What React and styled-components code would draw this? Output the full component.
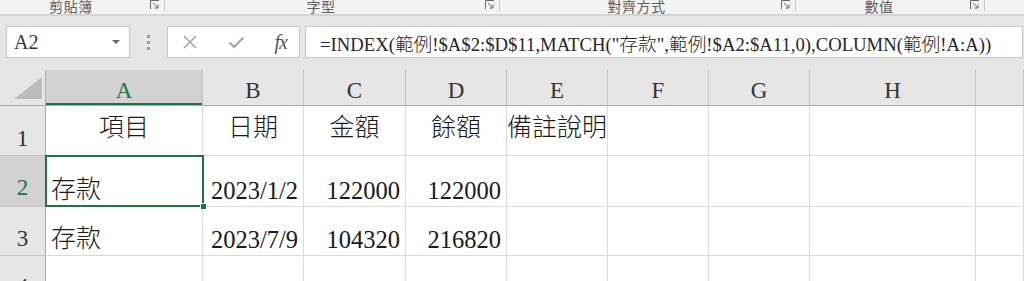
import React from "react";
import styled, { createGlobalStyle, css } from "styled-components";

const GREEN = "#217346";
const GRID = "#dadada";
const HEAD_LINE = "#c4c4c4";

const GlobalStyle = createGlobalStyle`
  html, body { margin: 0; padding: 0; background: #e6e6e6; overflow: hidden; }
  * { box-sizing: border-box; }
`;

const Page = styled.div`
  width: 1024px;
  height: 281px;
  overflow: hidden;
  display: flex;
  flex-direction: column;
  background: #e6e6e6;
  font-family: "Liberation Serif", "Noto Sans CJK TC", serif;
  color: #1a1a1a;
`;

/* ---------- Ribbon ---------- */
const Ribbon = styled.div`
  height: 15px;
  display: flex;
  background: #f3f3f3;
  border-bottom: 1px solid #d4d4d4;
  box-shadow: 0 1px 1px rgba(0, 0, 0, 0.07);
  overflow: hidden;
  flex: none;
`;

const RibbonGroup = styled.div`
  width: ${(p) => p.$w}px;
  flex: ${(p) => (p.$w ? "none" : "1")};
  height: 11px;
  display: flex;
  align-items: flex-end;
  border-right: ${(p) => (p.$last ? "none" : "1px solid #c8c8c8")};
`;

const GroupLabel = styled.div`
  flex: 1;
  text-align: center;
  font-family: "Noto Sans CJK TC", sans-serif;
  font-size: 14px;
  line-height: 14px;
  color: #5e5e5e;
  margin-bottom: -2px;
  letter-spacing: 0.5px;
`;

const Launcher = styled.svg`
  width: 10px;
  height: 10px;
  margin: 0 4px 0 8px;
  flex: none;
  align-self: flex-start;
`;

const LaunchIcon = () => (
  <Launcher viewBox="0 0 10 10">
    <path d="M0.5 9V0.5H9" fill="none" stroke="#6a6a6a" strokeWidth="1" />
    <path d="M3 3L8 8M8 4.5V8H4.5" fill="none" stroke="#6a6a6a" strokeWidth="1" />
  </Launcher>
);

/* ---------- Formula bar ---------- */
const FormulaRow = styled.div`
  display: flex;
  align-items: center;
  height: 32px;
  margin: 11px 1px 12px 6px;
  flex: none;
`;

const Box = styled.div`
  height: 32px;
  background: #fff;
  border: 1px solid #c6c6c6;
  display: flex;
  align-items: center;
`;

const NameBox = styled(Box)`
  width: 124px;
  padding: 0 9px 0 7px;
  font-family: "Liberation Serif", serif;
  font-size: 20px;
  color: #333;
  justify-content: space-between;
`;

const Caret = styled.span`
  width: 0;
  height: 0;
  border-left: 4px solid transparent;
  border-right: 4px solid transparent;
  border-top: 4px solid #6a6a6a;
`;

const Grip = styled.div`
  width: 37px;
  display: flex;
  flex-direction: column;
  align-items: center;
  gap: 3px;
  span {
    width: 3px;
    height: 3px;
    background: #9c9c9c;
  }
`;

const FxBox = styled(Box)`
  width: 133px;
  padding: 0 8px 0 14px;
  justify-content: space-between;
`;

const FxText = styled.span`
  font-family: "Liberation Serif", serif;
  font-style: italic;
  font-size: 20px;
  color: #555;
  margin-right: 4px;
  letter-spacing: -1px;
`;

const FormulaBox = styled(Box)`
  flex: 1;
  margin-left: 5px;
  padding-left: 14px;
  font-size: 18.7px;
  font-weight: 300;
  color: #262626;
  white-space: nowrap;
  overflow: hidden;
`;

/* ---------- Sheet grid ---------- */
const Sheet = styled.div`
  flex: none;
  display: grid;
  grid-template-columns: 46px 157px 101px 102px 101px 101px 101px 101px 166px 1fr;
  grid-template-rows: 36px 50px 51px 49px 49px;
  background: #fff;
`;

const Corner = styled.div`
  background: #e6e6e6;
  border-right: 1px solid #ababab;
  border-bottom: 1px solid #ababab;
  display: flex;
  align-items: flex-end;
  justify-content: flex-end;
  padding: 0 3px 6px 0;
`;

const Triangle = styled.div`
  width: 0;
  height: 0;
  border-left: 28px solid transparent;
  border-bottom: 22px solid #bcbcbc;
`;

const ColHead = styled.div`
  background: ${(p) => (p.$sel ? "#d2d2d2" : "#e6e6e6")};
  color: ${(p) => (p.$sel ? GREEN : "#333")};
  border-right: 1px solid ${HEAD_LINE};
  border-bottom: 1px solid #ababab;
  ${(p) => p.$sel && css`box-shadow: inset 0 -2px 0 ${GREEN};`}
  display: flex;
  align-items: center;
  justify-content: center;
  font-size: 23px;
  padding-top: 7px;
`;

const RowHead = styled.div`
  background: ${(p) => (p.$sel ? "#d2d2d2" : "#e6e6e6")};
  color: ${(p) => (p.$sel ? GREEN : "#333")};
  border-right: 1px solid #ababab;
  border-bottom: 1px solid ${HEAD_LINE};
  display: flex;
  align-items: flex-end;
  justify-content: center;
  font-size: 23px;
  line-height: 1;
  padding-bottom: ${(p) => p.$pb}px;
`;

const Cell = styled.div`
  position: relative;
  border-right: 1px solid ${GRID};
  border-bottom: 1px solid ${GRID};
  display: flex;
  align-items: ${(p) => (p.$mid ? "center" : "flex-end")};
  justify-content: ${(p) =>
    p.$align === "right" ? "flex-end" : p.$align === "center" ? "center" : "flex-start"};
  padding: 0 ${(p) => (p.$align === "right" ? 5 : 0)}px ${(p) => (p.$mid ? 5 : 1)}px
    ${(p) => (p.$align === "left" ? (p.$pl ?? 5) : 0)}px;
  font-size: ${(p) => (p.$cjk ? 25 : 24.5)}px;
  font-weight: ${(p) => (p.$cjk ? 300 : 400)};
  line-height: 1.2;
  white-space: nowrap;
  ${(p) =>
    p.$active &&
    css`
      &::after {
        content: "";
        position: absolute;
        top: -1px;
        left: -1px;
        right: -2px;
        bottom: -1px;
        border: 2px solid ${GREEN};
        pointer-events: none;
      }
      &::before {
        content: "";
        position: absolute;
        right: -5px;
        bottom: -4px;
        width: 5px;
        height: 5px;
        background: ${GREEN};
        border: 1px solid #fff;
        z-index: 2;
      }
    `}
`;

const columns = ["A", "B", "C", "D", "E", "F", "G", "H", ""];

const rows = [
  {
    n: "1",
    pb: 5,
    cells: [
      { t: "項目", align: "center", cjk: true, mid: true },
      { t: "日期", align: "center", cjk: true, mid: true },
      { t: "金額", align: "center", cjk: true, mid: true },
      { t: "餘額", align: "center", cjk: true, mid: true },
      { t: "備註說明", align: "left", cjk: true, mid: true, pl: 0 },
      {}, {}, {}, {},
    ],
  },
  {
    n: "2",
    sel: true,
    pb: 7,
    cells: [
      { t: "存款", align: "left", cjk: true, active: true },
      { t: "2023/1/2", align: "right" },
      { t: "122000", align: "right" },
      { t: "122000", align: "right" },
      {}, {}, {}, {}, {},
    ],
  },
  {
    n: "3",
    pb: 5,
    cells: [
      { t: "存款", align: "left", cjk: true },
      { t: "2023/7/9", align: "right" },
      { t: "104320", align: "right" },
      { t: "216820", align: "right" },
      {}, {}, {}, {}, {},
    ],
  },
  { n: "4", pb: 6, cells: [{}, {}, {}, {}, {}, {}, {}, {}, {}] },
];

const groups = [
  { w: 165, label: "剪貼簿" },
  { w: 335, label: "字型" },
  { w: 296, label: "對齊方式" },
  { w: 189, label: "數值" },
];

export default function App() {
  return (
    <Page>
      <GlobalStyle />
      <Ribbon>
        {groups.map((g) => (
          <RibbonGroup key={g.label} $w={g.w}>
            <GroupLabel>{g.label}</GroupLabel>
            <LaunchIcon />
          </RibbonGroup>
        ))}
        <RibbonGroup $last />
      </Ribbon>

      <FormulaRow>
        <NameBox>
          <span>A2</span>
          <Caret />
        </NameBox>
        <Grip>
          <span />
          <span />
          <span />
        </Grip>
        <FxBox>
          <svg width="16" height="16" viewBox="0 0 16 16">
            <path d="M2 2L14 14M14 2L2 14" stroke="#a6a6a6" strokeWidth="1.6" fill="none" />
          </svg>
          <svg width="17" height="13" viewBox="0 0 17 13">
            <path d="M1.5 6.5L6 11L15.5 1.5" stroke="#a6a6a6" strokeWidth="2.2" fill="none" />
          </svg>
          <FxText>fx</FxText>
        </FxBox>
        <FormulaBox>
          =INDEX(範例!$A$2:$D$11,MATCH("存款",範例!$A2:$A11,0),COLUMN(範例!A:A))
        </FormulaBox>
      </FormulaRow>

      <Sheet>
        <Corner>
          <Triangle />
        </Corner>
        {columns.map((c, i) => (
          <ColHead key={i} $sel={c === "A"}>
            {c}
          </ColHead>
        ))}
        {rows.map((r) => (
          <React.Fragment key={r.n}>
            <RowHead $sel={r.sel} $pb={r.pb}>
              {r.n}
            </RowHead>
            {r.cells.map((c, i) => (
              <Cell
                key={i}
                $align={c.align}
                $cjk={c.cjk}
                $mid={c.mid}
                $pl={c.pl}
                $active={c.active}
              >
                {c.t}
              </Cell>
            ))}
          </React.Fragment>
        ))}
      </Sheet>
    </Page>
  );
}
